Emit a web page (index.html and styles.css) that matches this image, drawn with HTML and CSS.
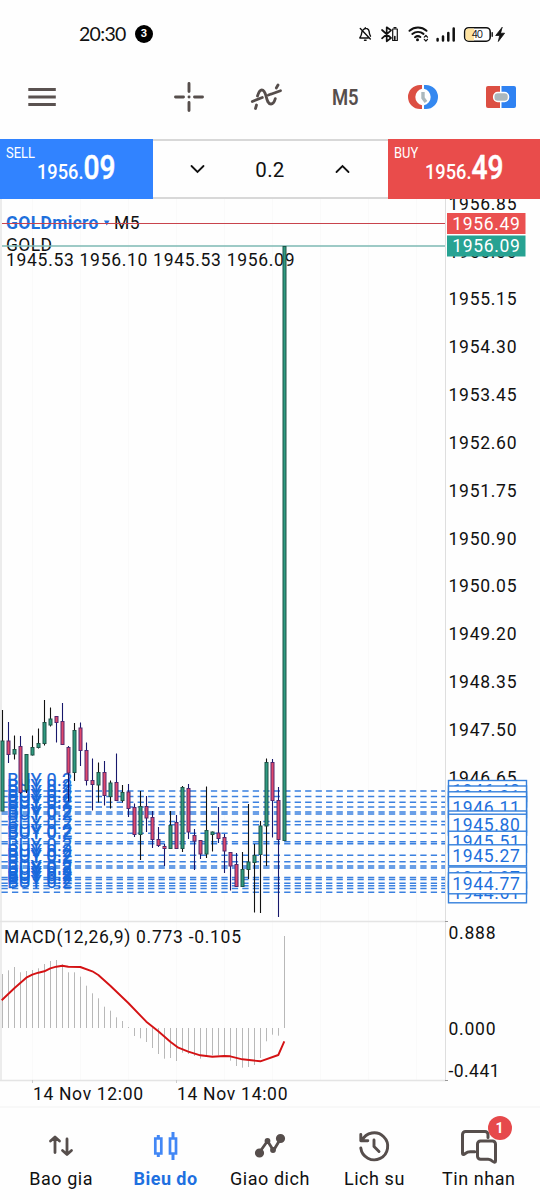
FILE: index.html
```html
<!DOCTYPE html>
<html lang="vi">
<head>
<meta charset="utf-8">
<title>GOLDmicro M5</title>
<link rel="stylesheet" href="styles.css">
</head>
<body>
<div class="app">
  <header class="status">
    <div class="status-left">
      <span class="time">20:30</span>
      <span class="count">3</span>
    </div>
    <svg class="status-icons" width="150" height="24" viewBox="356 22 150 24" fill="none" stroke="#111" stroke-width="1.400" stroke-linecap="round" stroke-linejoin="round">
      <path d="M360.300 28.500l10 10.500M362 31.500c-.3 3-.8 4.500-2.200 6.500h8.500M363.300 29.700c2.700-2.500 5.500-.8 5.900 2 .1 2 .4 3 1.300 4.500M364.500 40.300h1.600M365.300 27.700v.5"/>
      <path d="M382 30l9 8-4.300 3.300V27.300l4.300 3-9 8" stroke-width="1.700"/>
      <path d="M392.700 29h4.600v11.500h-4.600zM394 27.700h2" stroke-width="1.200"/><path d="M394.800 36.500v3" stroke-width="1.600"/>
      <path d="M409.500 30.800c5-4.300 12-4.300 17 0M412.300 34c3.400-2.700 8-2.700 11.200-.1M415 37.200c1.700-1.300 3.700-1.400 5.400-.2" stroke-width="2"/><circle cx="417.500" cy="39.800" r="1.500" fill="#111" stroke="none"/>
      <path d="M424.300 37.200l1.600-1.700 1.600 1.700M424.300 39.300l1.600 1.700 1.600-1.700" stroke-width="1.200"/>
      <path d="M437.600 39v1.500M443 36.500v4M448.300 33v7.500M453.700 28.500v12" stroke-width="2.500"/>
      <rect x="464.700" y="27.700" width="25.500" height="13.500" rx="4" fill="#fff" stroke-width="1.600"/>
      <path d="M468.500 28.500h5.500v12h-5.500a3 3 0 0 1-3-3v-6a3 3 0 0 1 3-3z" fill="#ffe3a0" stroke="none"/>
      <path d="M492.200 32.800v3.500"/>
      <path d="M502 27.500l-6.300 8h4l-1.400 6 6.300-8.300h-3.800z" fill="#111" stroke-width=".8"/>
      <text class="battery" x="471.500" y="38" textLength="11.500" stroke="none">40</text>
    </svg>
  </header>

  <nav class="toolbar">
    <svg class="menu" width="28" height="20" viewBox="28 87 28 20" stroke="#5a5250" stroke-width="2.900"><path d="M28.300 89.500h27.500M28.300 97h27.500M28.300 104.500h27.500"/></svg>
    <div class="tools">
      <svg width="32" height="32" viewBox="0 0 32 32" stroke="#564e4c" stroke-width="2.900" stroke-linecap="round"><path d="M16 2.500v8M16 21.500v8M2.500 16h8M21.500 16h8M16 16h.1"/></svg>
      <svg width="34" height="32" viewBox="250 81 34 32" fill="none" stroke="#564e4c" stroke-width="2.800" stroke-linecap="round" stroke-linejoin="round"><path d="M252.300 101.500l10-4M255.500 108.500l1-3.500M257.500 96c1.200-4 2.600-6 4.300-6 5.600 0 3.300 14 9.200 14 2 0 3.400-2 4.300-5.300M271.500 94l9-3.300M276.300 88l1.700-3M268.500 95l2-.7"/></svg>
      <span class="period">M5</span>
      <svg width="32" height="26" viewBox="407 84 32 26"><path d="M422 85h-2a12 12 0 0 0 0 24h2v-3.700a8.500 8.500 0 0 1 0-16.600z" fill="#dc4f43"/><path d="M424 85h2a12 12 0 0 1 0 24h-2v-3.700a8.500 8.500 0 0 0 0-16.600z" fill="#3488f0"/><path d="M423 92v6l3 4" fill="none" stroke="#abb8bd" stroke-width="3.400"/></svg>
      <svg width="32" height="24" viewBox="485 85 32 24"><path d="M488 86h12v22h-12a2 2 0 0 1-2-2V88a2 2 0 0 1 2-2z" fill="#dc4f43"/><path d="M501.500 86H514a2 2 0 0 1 2 2v18a2 2 0 0 1-2 2h-12.500z" fill="#2f82f2"/><rect x="493.700" y="92.500" width="14.800" height="9" rx="4" fill="#abb8bd" stroke="#fff" stroke-width="1.500"/></svg>
    </div>
  </nav>

  <section class="trade">
    <button class="quote sell">
      <span class="side">SELL</span>
      <svg class="price" width="84" height="30" viewBox="0 0 84 30"><text class="big-figure" x="0" y="26" textLength="46.500" lengthAdjust="spacingAndGlyphs">1956.</text><text class="pips" x="46.500" y="26" textLength="32" lengthAdjust="spacingAndGlyphs">09</text></svg>
    </button>
    <div class="volume">
      <svg width="18" height="12" viewBox="0 0 18 12"><path d="M2.500 3l6 6 6-6"/></svg>
      <span>0.2</span>
      <svg width="18" height="12" viewBox="0 0 18 12"><path d="M2.500 9l6-6 6 6"/></svg>
    </div>
    <button class="quote buy">
      <span class="side">BUY</span>
      <svg class="price" width="84" height="30" viewBox="0 0 84 30"><text class="big-figure" x="0" y="26" textLength="46.500" lengthAdjust="spacingAndGlyphs">1956.</text><text class="pips" x="46.500" y="26" textLength="32" lengthAdjust="spacingAndGlyphs">49</text></svg>
    </button>
  </section>

  <svg class="chart" id="chart" width="540" height="907" viewBox="0 199 540 907"></svg>

  <footer class="tabs">
    <a class="tab">
      <svg width="40" height="40" viewBox="0 0 40 40" fill="none" stroke="#564e4c" stroke-width="2.800" stroke-linecap="round" stroke-linejoin="round"><path d="M14 26.500V11.500M9.500 15l4.500-4 4.500 4M26 13v15M21.500 24.500l4.500 4 4.500-4"/></svg>
      <span>Bao gia</span>
    </a>
    <a class="tab active">
      <svg width="40" height="40" viewBox="0 0 40 40" fill="none" stroke="#4287f5" stroke-width="2.700"><path d="M9.300 12.500h6v15h-6zM24 12.500h6v15h-6z"/><path d="M12.300 9v3.500M12.300 27.500v3.500M27 6v6.500M27 27.500v6.500" stroke-width="3"/></svg>
      <span>Bieu do</span>
    </a>
    <a class="tab">
      <svg width="40" height="40" viewBox="0 0 40 40" fill="#564e4c" stroke="#564e4c" stroke-width="2.800" stroke-linecap="round" stroke-linejoin="round"><path d="M9 27l8.500-12 6 9.500L31 12" fill="none"/><circle cx="9.500" cy="27" r="3.200"/><circle cx="17.500" cy="15" r="1.500"/><circle cx="23" cy="24" r="1.500"/><circle cx="30.500" cy="12.500" r="3.200"/></svg>
      <span>Giao dich</span>
    </a>
    <a class="tab">
      <svg width="40" height="40" viewBox="0 0 40 40" fill="none" stroke="#564e4c" stroke-width="2.900" stroke-linecap="round" stroke-linejoin="round"><path d="M8 14.500A13.500 13.500 0 1 1 6.800 22M6.800 8.500v6.300h7M20 14v6.500l5 5"/></svg>
      <span>Lich su</span>
    </a>
    <a class="tab">
      <svg width="40" height="40" viewBox="0 0 40 40" fill="none" stroke="#564e4c" stroke-width="3" stroke-linecap="round" stroke-linejoin="round"><path d="M29 11.500V8.500a3 3 0 0 0-3-3H6.500a3 3 0 0 0-3 3v18.500c0 2 1.500 1.500 2.800.5 1.500-1.200 2.300-1.700 5-1.700h4.500"/><path d="M21.500 15h12a3 3 0 0 1 3 3v17c0 1.600-1.500 1.500-2.600.5-1.700-1.700-2.600-2.300-4.700-2.300h-7.700a3 3 0 0 1-3-3V18a3 3 0 0 1 3-3z"/></svg>
      <span>Tin nhan</span>
      <b class="badge">1</b>
    </a>
  </footer>
</div>
<script src="chart.js"></script>
</body>
</html>
```

FILE: styles.css
```css
* { box-sizing: border-box; }
body { margin: 0; background: #fefefe; font-family: Roboto, "Liberation Sans", sans-serif; color: #111; }
.app { width: 540px; height: 1200px; display: flex; flex-direction: column; overflow: hidden; }

.status { height: 56px; padding: 12px 34px 0 79px; display: flex; justify-content: space-between; align-items: center; }
.status-left { display: flex; align-items: center; gap: 8px; }
.time { font: 19.500px/24px Lato, sans-serif; letter-spacing: -.7px; width: 48px; white-space: nowrap; }
.count { width: 18px; height: 18px; border-radius: 50%; background: #000; color: #fff; font: bold 11px/18px Roboto, sans-serif; text-align: center; }
.battery { font: 10px Inter, sans-serif; fill: #222; }

.toolbar { height: 83px; display: flex; align-items: center; padding: 0 0 1px 28px; }
.menu { margin-right: 94px; flex: none; }
.tools { flex: none; display: grid; grid-template-columns: repeat(5, 78px); align-items: center; justify-items: center; }
.period { font-size: 22.500px; font-weight: 600; color: #564e4c; transform: scaleX(.82); }

.trade { height: 60px; flex: none; display: grid; grid-template-columns: 152.5px 1fr 152.5px; }
.quote { position: relative; border: 0; padding: 0; color: #fff; font-family: inherit; text-align: left; display: flex; align-items: flex-start; }
.sell { background: #3183ff; }
.buy { background: #e94c4b; }
.side { position: absolute; left: 6px; top: 5px; font-size: 15px; line-height: 18px; transform: scaleX(.86); transform-origin: left; }
.price { margin: 14px 0 0 37px; fill: #fff; overflow: visible; }
.big-figure { font-size: 21px; font-weight: 500; }
.pips { font-size: 32.500px; font-weight: 500; stroke: #fff; stroke-width: .5; }
.volume { border-top: 2px solid #d8d8d8; border-bottom: 2px solid #d8d8d8; display: grid; grid-template-columns: 90px 55px 90px; align-items: center; justify-items: center; font-size: 20.500px; }
.volume span { letter-spacing: .3px; padding-top: 1px; }
.volume svg { fill: none; stroke: #111; stroke-width: 1.800; stroke-linecap: round; }

.chart { display: block; flex: none; }
.chart text { font-size: 17.500px; fill: #111; }
.chart .light { fill: #fff; }
.chart .order { fill: #1e70dc; }
.chart .position { fill: #1768dc; font-size: 18px; stroke: #1768dc; stroke-width: .25; }
.chart .symbol { fill: #1e70dc; font-weight: 700; }

.tabs { flex: 1; padding: 0 9px; display: grid; grid-template-columns: repeat(5, 1fr); border-top: 2px solid #f8f8f8; }
.tab { position: relative; display: flex; flex-direction: column; align-items: center; padding-top: 18px; font-size: 18px; line-height: 22px; letter-spacing: .55px; }
.tab span { margin-top: 2px; white-space: nowrap; }
.active { color: #1e70e0; font-weight: 700; letter-spacing: .45px; }
.badge { position: absolute; left: 61px; top: 8px; width: 24px; height: 24px; border-radius: 50%; background: #e6494b; color: #fff; font-size: 14px; line-height: 24px; text-align: center; letter-spacing: 0; }
```

FILE: chart.js
```js
const svg = document.getElementById('chart');
const out = [];
const line = (x1, y1, x2, y2, stroke, w = 1, extra = '') =>
  out.push(`<line x1="${x1}" y1="${y1}" x2="${x2}" y2="${y2}" stroke="${stroke}" stroke-width="${w}" ${extra}/>`);
const text = (x, y, s, len, cls = '') =>
  out.push(`<text x="${x}" y="${y}" textLength="${len}" class="${cls}">${s}</text>`);
const barX = i => 2.5 + 6 * i;

// Grid and pane borders
for (let x = 32.5; x < 445; x += 48) line(x, 199, x, 1080, '#fafafa');
line(1, 199, 1, 1081, '#e6e6e6', 1.5);
line(445.5, 199, 445.5, 1081, '#dedede');
line(0, 921.5, 446, 921.5, '#e4e4e4', 1.5);
line(0, 1080.5, 446, 1080.5, '#e4e4e4', 1.5);
[32.5, 176.5].forEach(x => line(x, 1080, x, 1083, '#ccc'));
[921.5, 1080.5].forEach(y => line(445, y, 448, y, '#999'));

// Price scale
for (let i = 0; i < 13; i++) text(448.5, 209.7 + 47.83 * i, (1956.85 - 0.85 * i).toFixed(2), 68);
text(448.5, 939, '0.888', 47);
text(448.5, 1034.5, '0.000', 47);
text(448.5, 1076.500, '-0.441', 51);

// Chart captions
text(6, 229, 'GOLDmicro', 92.5, 'symbol');
out.push('<path d="M104 220.500h5.500l-2.700 5z" fill="#1e70dc"/>');
text(114, 229, 'M5', 25.500);
text(6, 251, 'GOLD', 46);
text(6, 266.300, '1945.53 1956.10 1945.53 1956.09', 288.5);

// Ask and bid lines
line(2, 223.5, 445, 223.5, '#c8434c', 1.2);
line(2, 246, 445, 246, '#7db8b3', 1.6);

// Open position levels
const levels = [791, 796.5, 802.3, 807, 812, 814, 821.5, 824.7, 833.3, 841.7, 843.7, 855.3, 861.7, 866, 868, 877.5, 879.5, 883.3, 885.7, 888.5, 892.3];
levels.forEach(y => line(1.5, y, 445, y, '#3a80e0', 1.4, 'stroke-dasharray="6.300 4.170"'));
levels.forEach(y => text(7.2, y - 4.8, 'BUY 0.2', 65, 'position'));

// Candles: [high, body top, body bottom, low, rising]
const candles = [
  [710, 741, 811, 811, 1], [722, 741, 754.5, 763, 0], [735.5, 749.5, 754, 759.5, 1], [736, 746.5, 792.5, 794, 0],
  [754, 754.5, 790, 793, 1], [735.5, 747.5, 755, 755.5, 1], [728.5, 743.5, 747.5, 748.5, 1], [700, 722.5, 743.5, 745.5, 1],
  [707.5, 719, 725, 726.5, 1], [716, 716.5, 722.5, 742.5, 0], [703, 721.5, 744.5, 745, 0], [746, 747.5, 773, 801.5, 0],
  [723, 730.5, 772.5, 781, 1], [722.5, 728, 750.5, 766, 0], [742.5, 750.5, 780.5, 785.5, 0], [758.5, 780.5, 784.5, 810.5, 0],
  [762.5, 772.5, 785, 802.5, 1], [761, 772.5, 795.5, 805.5, 0], [780.5, 783, 796.5, 808.5, 1], [753.5, 782.5, 800.5, 800.5, 0],
  [785, 792.5, 800.5, 802.5, 1], [784, 792, 808.5, 817, 0], [803.5, 807.5, 834.5, 837, 0], [791, 806.5, 834.5, 860, 1],
  [796, 806.5, 818, 832, 0], [811, 817.5, 839.5, 848, 0], [827, 839.5, 845.5, 847, 0], [844, 846.5, 848.5, 866, 0],
  [811, 825.5, 848.5, 849, 1], [815, 822.5, 848.5, 849, 0], [786, 787.5, 848.5, 852, 1], [784, 788.5, 832, 839, 0],
  [829, 835.5, 841, 870, 0], [840, 840.5, 854, 859, 0], [786.5, 830.5, 854, 858, 1], [831.5, 832, 834.5, 851.5, 1],
  [807, 833, 838.5, 843, 0], [834, 837.5, 851, 873, 0], [852, 852.5, 866, 890.5, 0], [853, 864.5, 886.5, 887, 0],
  [852, 869.5, 886.5, 887, 1], [804, 862, 869.5, 879, 1], [844, 855.5, 862.5, 912.5, 1], [821, 826, 854.5, 913, 1],
  [758.5, 762.5, 826, 866, 1], [759, 762.5, 800.5, 837.5, 0], [787, 800.5, 839.5, 917, 0], [246, 246.5, 840.5, 841, 1]
];
candles.forEach(([hi, top, bottom, lo, up], i) => {
  const x = barX(i), ink = up ? '#111' : '#17176b';
  line(x, hi, x, lo, ink, 1.1);
  out.push(`<rect x="${x - 1.5}" y="${top}" width="3" height="${bottom - top}" fill="${up ? '#2f9a80' : '#e0486c'}" stroke="${up ? '#1f5448' : '#54286c'}" stroke-width="1"/>`);
});

// Price tags on the scale, in stacking order
const tags = [
  [791, '1946.40'], [796.5, '1946.31'], [802.3, '1946.20'], [807.2, '1946.11'], [821.5, '1945.85'], [824.7, '1945.80'],
  [841.7, '1945.51'], [855.3, '1945.27'], [877.5, '1944.87'], [892.3, '1944.61'], [883.3, '1944.77']
];
tags.forEach(([y, s]) => {
  out.push(`<rect x="448.500" y="${y - 10.5}" width="78" height="21" fill="#fff" stroke="#3580dc" stroke-width="1.400"/>`);
  text(452.3, y + 6.3, s, 67.5, 'order');
});
out.push('<rect x="447" y="213" width="78.500" height="21" fill="#ea5050"/><rect x="447" y="235.500" width="78.500" height="21" fill="#27a292"/>');
text(452.3, 229.8, '1956.49', 67.5, 'light');
text(452.3, 252.3, '1956.09', 67.5, 'light');

// MACD histogram and signal line
text(4, 943, 'MACD(12,26,9) 0.773 -0.105', 237);
const macd = [974, 970.3, 967, 972.3, 971, 970, 968.3, 964, 961, 960, 964.3, 972.3, 972.3, 976.7, 985.7, 993.3, 998.3, 1006.7, 1010.7, 1017.3, 1021, 1027,
  1036, 1038.3, 1042, 1048, 1054, 1058.7, 1058, 1061, 1052.7, 1054, 1056, 1058.7, 1056.7, 1055.3, 1055.3, 1056, 1060.7, 1066, 1067.7, 1067, 1065, 1058, 1041.3, 1034.7, 1035.7, 936];
macd.forEach((y, i) => line(barX(i), 1028, barX(i), y, '#b8b8b8'));
out.push('<polyline points="1.700,1000.300 14.300,988.300 26.300,977.700 32.300,974.700 38.300,972.700 44.300,971.300 50.300,968.300 56.300,966.700 62.300,965.700 68.300,966.700 80.300,967 92.300,971.300 98.300,975 110.300,985.700 128.300,1003 146.300,1021.700 158.300,1031.300 170.300,1041.700 178.300,1047.700 188.300,1051.700 200.300,1055.300 212.300,1056.700 224.300,1056 230.300,1056.300 242.300,1059.300 260.300,1061.300 278.300,1055 284.300,1041.300" fill="none" stroke="#d41214" stroke-width="1.900" stroke-linejoin="round"/>');

// Time scale
text(33, 1099.7, '14 Nov 12:00', 110);
text(177, 1099.7, '14 Nov 14:00', 110.500);

svg.innerHTML = out.join('');
```
